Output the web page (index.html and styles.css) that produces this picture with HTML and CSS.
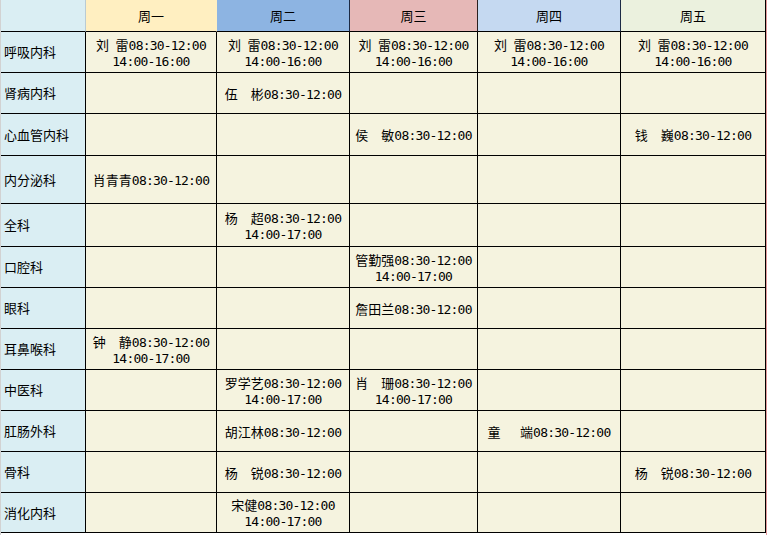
FILE: index.html
```html
<!DOCTYPE html>
<html lang="zh-CN">
<head>
<meta charset="utf-8">
<title>门诊排班表</title>
<link rel="stylesheet" href="styles.css">
</head>
<body>
<div class="page">
  <div class="sheet">
    <div class="cell head h0"></div>
    <div class="cell head h1">周一</div>
    <div class="cell head h2">周二</div>
    <div class="cell head h3">周三</div>
    <div class="cell head h4">周四</div>
    <div class="cell head h5">周五</div>

    <div class="cell dept">呼吸内科</div>
    <div class="cell"><div><span class="nm">刘&ensp;雷</span><span class="tm">08:30-12:00</span></div><div class="tm">14:00-16:00</div></div>
    <div class="cell"><div><span class="nm">刘&ensp;雷</span><span class="tm">08:30-12:00</span></div><div class="tm">14:00-16:00</div></div>
    <div class="cell"><div><span class="nm">刘&ensp;雷</span><span class="tm">08:30-12:00</span></div><div class="tm">14:00-16:00</div></div>
    <div class="cell"><div><span class="nm">刘&ensp;雷</span><span class="tm">08:30-12:00</span></div><div class="tm">14:00-16:00</div></div>
    <div class="cell"><div><span class="nm">刘&ensp;雷</span><span class="tm">08:30-12:00</span></div><div class="tm">14:00-16:00</div></div>

    <div class="cell dept">肾病内科</div>
    <div class="cell"></div>
    <div class="cell"><div><span class="nm">伍　彬</span><span class="tm">08:30-12:00</span></div></div>
    <div class="cell"></div>
    <div class="cell"></div>
    <div class="cell"></div>

    <div class="cell dept">心血管内科</div>
    <div class="cell"></div>
    <div class="cell"></div>
    <div class="cell"><div><span class="nm">侯　敏</span><span class="tm">08:30-12:00</span></div></div>
    <div class="cell"></div>
    <div class="cell"><div><span class="nm">钱　巍</span><span class="tm">08:30-12:00</span></div></div>

    <div class="cell dept">内分泌科</div>
    <div class="cell"><div><span class="nm">肖青青</span><span class="tm">08:30-12:00</span></div></div>
    <div class="cell"></div>
    <div class="cell"></div>
    <div class="cell"></div>
    <div class="cell"></div>

    <div class="cell dept">全科</div>
    <div class="cell"></div>
    <div class="cell"><div><span class="nm">杨　超</span><span class="tm">08:30-12:00</span></div><div class="tm">14:00-17:00</div></div>
    <div class="cell"></div>
    <div class="cell"></div>
    <div class="cell"></div>

    <div class="cell dept">口腔科</div>
    <div class="cell"></div>
    <div class="cell"></div>
    <div class="cell"><div><span class="nm">管勤强</span><span class="tm">08:30-12:00</span></div><div class="tm">14:00-17:00</div></div>
    <div class="cell"></div>
    <div class="cell"></div>

    <div class="cell dept">眼科</div>
    <div class="cell"></div>
    <div class="cell"></div>
    <div class="cell"><div><span class="nm">詹田兰</span><span class="tm">08:30-12:00</span></div></div>
    <div class="cell"></div>
    <div class="cell"></div>

    <div class="cell dept">耳鼻喉科</div>
    <div class="cell"><div><span class="nm">钟　静</span><span class="tm">08:30-12:00</span></div><div class="tm">14:00-17:00</div></div>
    <div class="cell"></div>
    <div class="cell"></div>
    <div class="cell"></div>
    <div class="cell"></div>

    <div class="cell dept">中医科</div>
    <div class="cell"></div>
    <div class="cell"><div><span class="nm">罗学艺</span><span class="tm">08:30-12:00</span></div><div class="tm">14:00-17:00</div></div>
    <div class="cell"><div><span class="nm">肖　珊</span><span class="tm">08:30-12:00</span></div><div class="tm">14:00-17:00</div></div>
    <div class="cell"></div>
    <div class="cell"></div>

    <div class="cell dept">肛肠外科</div>
    <div class="cell"></div>
    <div class="cell"><div><span class="nm">胡江林</span><span class="tm">08:30-12:00</span></div></div>
    <div class="cell"></div>
    <div class="cell"><div><span class="nm">童&emsp;&ensp;端</span><span class="tm">08:30-12:00</span></div></div>
    <div class="cell"></div>

    <div class="cell dept">骨科</div>
    <div class="cell"></div>
    <div class="cell"><div><span class="nm">杨　锐</span><span class="tm">08:30-12:00</span></div></div>
    <div class="cell"></div>
    <div class="cell"></div>
    <div class="cell"><div><span class="nm">杨　锐</span><span class="tm">08:30-12:00</span></div></div>

    <div class="cell dept">消化内科</div>
    <div class="cell"></div>
    <div class="cell"><div><span class="nm">宋健</span><span class="tm">08:30-12:00</span></div><div class="tm">14:00-17:00</div></div>
    <div class="cell"></div>
    <div class="cell"></div>
    <div class="cell"></div>
  </div>
</div>
</body>
</html>
```
FILE: styles.css
```css
html, body {
  margin: 0;
  padding: 0;
  background: #ffffff;
}

.page {
  width: 767px;
  height: 535px;
  box-sizing: border-box;
  border-left: 1px solid #d2d2d2;
  border-right: 1px solid #e39a9c;
  overflow: hidden;
}

.sheet {
  display: grid;
  grid-template-columns: 85px 131px 133px 128px 143px 145px;
  grid-template-rows: 32px 41px 41px 42px 48px 43px 41px 41px 41px 41px 41px 41px 40px;
  font-family: "Noto Sans CJK SC", "Noto Sans", sans-serif;
  font-size: 13px;
  line-height: 16px;
  color: #000;
}

.cell {
  box-sizing: border-box;
  border-right: 1px solid #000;
  border-bottom: 1px solid #000;
  background: #f5f3df;
  display: flex;
  flex-direction: column;
  align-items: center;
  justify-content: center;
  white-space: pre;
  padding-top: 2px;
}

.head {
  padding-top: 0;
}

.h0 { background: #daeef3; border-right-color: #b9cbd3; }
.h1 { background: #ffefc1; border-right-color: transparent; }
.h2 { background: #8db4e2; border-right-color: #1c2a44; }
.h3 { background: #e6b8b7; border-right-color: #2a1f1f; }
.h4 { background: #c5d9f1; border-right-color: #1c2a44; }
.h5 { background: #ebf1de; }

.dept {
  background: #daeef3;
  align-items: flex-start;
  padding-left: 3px;
  padding-top: 0;
}

.nm {
  font-family: "Noto Sans CJK SC", sans-serif;
}

.tm {
  font-family: "DejaVu Sans Mono", monospace;
  font-size: 13px;
  letter-spacing: -0.8px;
}
```
